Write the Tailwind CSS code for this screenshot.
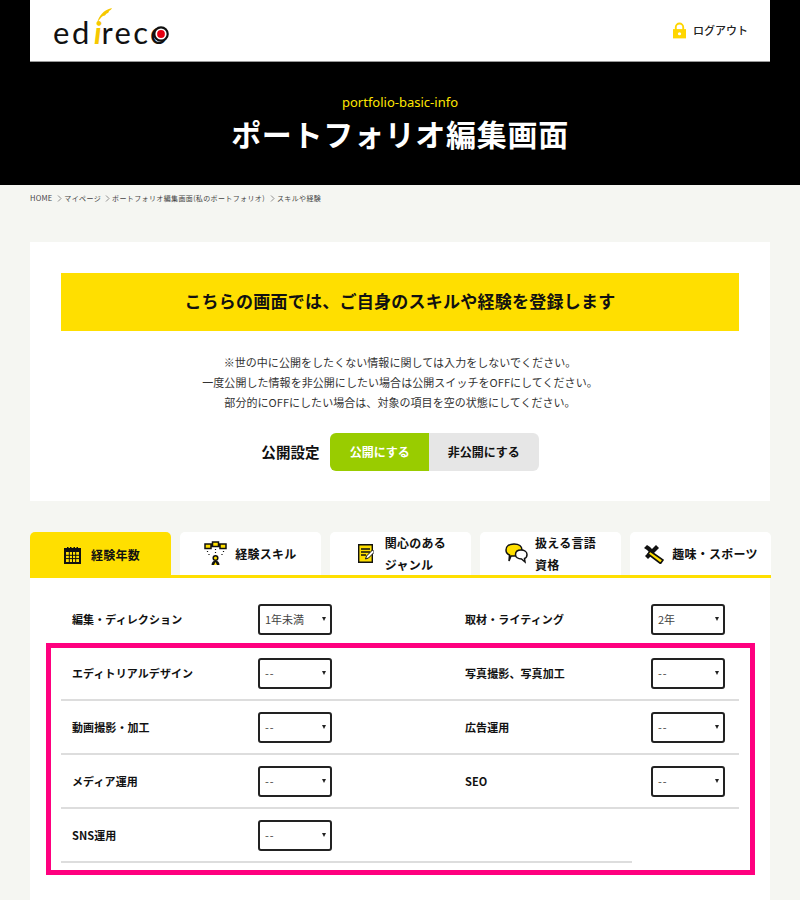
<!DOCTYPE html>
<html lang="ja"><head><meta charset="utf-8">
<script src="https://cdn.jsdelivr.net/npm/@tailwindcss/browser@4"></script>
</head>
<body class="bg-[#f5f6f2] font-['Noto_Sans_CJK_JP','Noto_Sans',sans-serif] text-[#111]">
<div class="relative w-[800px] h-[900px] overflow-hidden">
<header class="bg-black h-[185px] flex flex-col items-center">
  <div class="w-[740px] h-[62px] bg-white border-b border-[#999] flex items-center justify-between pl-[23px] pr-[22px] shrink-0">
    <div class="relative flex items-center w-[116px] h-[40px] font-['Lato',sans-serif] text-[31px] leading-none tracking-[2.6px] text-[#111] mt-[3px]">
      <span>ed</span><span class="italic text-[#f6c800] font-bold ml-[2px] tracking-normal">i</span><span class="tracking-[2.3px]">reco</span>
      <svg class="absolute left-[100px] top-[14px] w-[16px] h-[16px]" viewBox="0 0 16 16"><circle cx="8" cy="8" r="6.700" fill="#fff" stroke="#111" stroke-width="2.200"/><circle cx="8" cy="8" r="3.900" fill="#e60012"/></svg>
      <svg class="absolute left-[43px] top-[-4px] w-[17px] h-[15px]" viewBox="0 0 17 15"><path d="M1 15C3 8 7 2 16 0c-1 2-2 2-3 3 0 2-2 2-3 3 0 1-2 2-3 2-2 1-3 3-6 7z" fill="#f6c800"/></svg>
    </div>
    <div class="flex items-center gap-[7px] text-[11px] text-[#222] font-medium">
      <svg class="w-[13px] h-[17px]" viewBox="0 0 14 17"><path d="M3 8V5a4 4 0 0 1 8 0v3" fill="none" stroke="#ffd600" stroke-width="2"/><path d="M0 7h14v10H0z" fill="#ffd600"/><circle cx="7" cy="12" r="1.700" fill="#fff"/></svg>
      <span>ログアウト</span>
    </div>
  </div>
  <p class="mt-[31px] text-[13px] leading-[18px] text-[#ffe600] font-['Noto_Sans',sans-serif]">portfolio-basic-info</p>
  <h1 class="mt-0 text-[30px] leading-[44px] font-bold text-white tracking-[0.7px]">ポートフォリオ編集画面</h1>
</header>
<nav class="h-[57px] pl-[30px] pt-[6px] text-[7px] leading-[14px] text-[#444] flex items-start gap-[2px] tracking-[0.37px]">
  <span class="text-[7.5px] tracking-[0.2px]">HOME</span>
  <svg class="w-[5px] h-[7px] ml-[3px] mt-[4px]" viewBox="0 0 5 7"><path d="M1 .5l3 3-3 3" fill="none" stroke="#777" stroke-width=".8"/></svg>
  <span>マイページ</span>
  <svg class="w-[5px] h-[7px] ml-[2px] mt-[4px]" viewBox="0 0 5 7"><path d="M1 .5l3 3-3 3" fill="none" stroke="#777" stroke-width=".8"/></svg>
  <span>ポートフォリオ編集画面(私のポートフォリオ)</span>
  <svg class="w-[5px] h-[7px] ml-[3px] mt-[4px]" viewBox="0 0 5 7"><path d="M1 .5l3 3-3 3" fill="none" stroke="#777" stroke-width=".8"/></svg>
  <span>スキルや経験</span>
</nav>
<section class="mx-[30px] w-[740px] h-[259px] bg-white px-[31px] pt-[31px] flex flex-col items-center">
  <div class="w-[678px] h-[58px] bg-[#ffdf00] flex items-center justify-center pb-[2px] text-[17px] font-bold tracking-[0.25px]">こちらの画面では、ご自身のスキルや経験を登録します</div>
  <div class="mt-[21px] text-[11px] leading-[20px] text-center text-[#333] tracking-[0.05px]">
    <p>※世の中に公開をしたくない情報に関しては入力をしないでください。</p>
    <p>一度公開した情報を非公開にしたい場合は公開スイッチをOFFにしてください。</p>
    <p>部分的にOFFにしたい場合は、対象の項目を空の状態にしてください。</p>
  </div>
  <div class="mt-[21px] flex items-center">
    <span class="text-[14.5px] font-bold mr-[10px] tracking-[0.1px]">公開設定</span>
    <div class="flex h-[38px] w-[209px] rounded-[6px] overflow-hidden text-[12px] font-bold">
      <div class="w-[99px] bg-[#99cc00] text-white flex items-center justify-center pl-[1px]">公開にする</div>
      <div class="flex-1 bg-[#e6e6e6] flex items-center justify-center">非公開にする</div>
    </div>
  </div>
</section>
<div class="mt-[31px] ml-[30px] w-[741px] flex gap-[9px] h-[46px] border-b-[3px] border-[#ffdf00] text-[12px] font-bold tracking-[0.25px]">
  <div class="w-[141px] h-[46px] bg-[#ffdf00] rounded-t-[5px] flex items-center justify-center gap-[10px] pl-[3px]">
    <svg class="w-[17px] h-[18px]" viewBox="0 0 17 18"><path d="M0 2h17v16H0z" fill="#111"/><path d="M2 6h13v10H2z" fill="#ffdf00"/><path d="M3 1h1.500v3H3zM6 1h1.500v3H6zM9.500 1H11v3H9.500zM12.500 1H14v3h-1.500z" fill="#111"/><path d="M5.300 6v10M8.500 6v10M11.700 6v10M2 9.300h13M2 12.600h13" stroke="#111" stroke-width="1"/></svg>
    <span>経験年数</span>
  </div>
  <div class="w-[141px] h-[43px] bg-white rounded-t-[5px] flex items-center justify-center gap-[8px]">
    <svg class="w-[23px] h-[25px]" viewBox="0 0 23 25"><path d="M1 3h6v4.500H1zM8.500 1h6v4.500h-6zM16 3h6v4.500h-6z" fill="#ffdf00" stroke="#111" stroke-width="1.500"/><path d="M3.500 10v1M5 13v1M11.500 8v1M11.500 11v1M19.500 10v1M18 13v1" stroke="#111" stroke-width="1.200"/><circle cx="11.500" cy="17" r="2.300" fill="#ffdf00" stroke="#111" stroke-width="1.500"/><path d="M7.500 24c0-3 2-4.500 4-4.500s4 1.500 4 4.500z" fill="#111"/><path d="M10 24l1.500-3 1.500 3z" fill="#ffdf00"/></svg>
    <span>経験スキル</span>
  </div>
  <div class="w-[141px] h-[43px] bg-white rounded-t-[5px] flex items-center justify-center gap-[11px] pl-[3px]">
    <svg class="w-[16px] h-[19px]" viewBox="0 0 16 19"><path d="M.7.700h13.600v17.600H.7z" fill="#ffdf00" stroke="#111" stroke-width="1.400"/><path d="M3 5h9M3 8h9M3 11h5" stroke="#111" stroke-width="1.300"/><path d="M7.500 15l1-3 6-6 2 2-6 6z" fill="#fff" stroke="#111" stroke-width="1"/></svg>
    <span class="leading-[22px] text-left">関心のある<br>ジャンル</span>
  </div>
  <div class="w-[141px] h-[43px] bg-white rounded-t-[5px] flex items-center justify-center gap-[7px]">
    <svg class="w-[23px] h-[21px]" viewBox="0 0 23 21"><path d="M9 1c5 0 8 2.500 8 6s-3 6-8 6l-3 0-2 5 .5-6C2 11 1 9 1 7c0-3.500 3-6 8-6z" fill="#ffdf00" stroke="#111" stroke-width="1.500"/><path d="M16 7c3.500 0 6 2 6 4.500 0 2-1 3.500-2.500 4l.5 3.500-3.500-3c-3.500 0-6-2-6-4.500S12.500 7 16 7z" fill="#fff" stroke="#111" stroke-width="1.500"/></svg>
    <span class="leading-[22px] text-left">扱える言語<br>資格</span>
  </div>
  <div class="w-[141px] h-[43px] bg-white rounded-t-[5px] flex items-center justify-center gap-[8px]">
    <svg class="w-[21px] h-[20px]" viewBox="0 0 21 20"><path d="M13 1l3 3-11 11-3-3z" fill="#111"/><path d="M1 4l3-3 3 2 3 3-3 3-3-3z" fill="#111"/><path d="M7 7l13 9-2.500 3.500L5 10z" fill="#ffdf00" stroke="#111" stroke-width="1.600"/></svg>
    <span>趣味・スポーツ</span>
  </div>
</div>
<main class="mx-[30px] w-[740px] h-[322px] bg-white px-[31px] pt-[15px] text-[11px] font-bold tracking-[0.1px]">
  <div class="h-[54px] flex items-center border-b-2 border-transparent">
    <div class="w-[393px] flex items-center"><span class="w-[198px] pl-[11px]">編集・ディレクション</span>
      <div class="relative w-[74px] h-[31px] ml-[-1px] border-2 border-[#222] rounded-[3px] flex items-center pl-[5px] font-normal text-[#444] tracking-normal">1年未満<svg class="absolute right-[4px] top-[11px] w-[4px] h-[4px]" viewBox="0 0 5 5"><path d="M0 0h5L2.500 5z" fill="#222"/></svg></div></div>
    <div class="flex-1 flex items-center"><span class="w-[198px] pl-[11px]">取材・ライティング</span>
      <div class="relative w-[74px] h-[31px] ml-[-1px] border-2 border-[#222] rounded-[3px] flex items-center pl-[5px] font-normal text-[#444] tracking-normal">2年<svg class="absolute right-[4px] top-[11px] w-[4px] h-[4px]" viewBox="0 0 5 5"><path d="M0 0h5L2.500 5z" fill="#222"/></svg></div></div>
  </div>
  <div class="h-[54px] flex items-center border-b-2 border-[#ddd]">
    <div class="w-[393px] flex items-center"><span class="w-[198px] pl-[11px]">エディトリアルデザイン</span>
      <div class="relative w-[74px] h-[31px] ml-[-1px] border-2 border-[#222] rounded-[3px] flex items-center pl-[5px] font-normal text-[#444] tracking-[1px]">--<svg class="absolute right-[4px] top-[11px] w-[4px] h-[4px]" viewBox="0 0 5 5"><path d="M0 0h5L2.500 5z" fill="#222"/></svg></div></div>
    <div class="flex-1 flex items-center"><span class="w-[198px] pl-[11px]">写真撮影、写真加工</span>
      <div class="relative w-[74px] h-[31px] ml-[-1px] border-2 border-[#222] rounded-[3px] flex items-center pl-[5px] font-normal text-[#444] tracking-[1px]">--<svg class="absolute right-[4px] top-[11px] w-[4px] h-[4px]" viewBox="0 0 5 5"><path d="M0 0h5L2.500 5z" fill="#222"/></svg></div></div>
  </div>
  <div class="h-[54px] flex items-center border-b-2 border-[#ddd]">
    <div class="w-[393px] flex items-center"><span class="w-[198px] pl-[11px]">動画撮影・加工</span>
      <div class="relative w-[74px] h-[31px] ml-[-1px] border-2 border-[#222] rounded-[3px] flex items-center pl-[5px] font-normal text-[#444] tracking-[1px]">--<svg class="absolute right-[4px] top-[11px] w-[4px] h-[4px]" viewBox="0 0 5 5"><path d="M0 0h5L2.500 5z" fill="#222"/></svg></div></div>
    <div class="flex-1 flex items-center"><span class="w-[198px] pl-[11px]">広告運用</span>
      <div class="relative w-[74px] h-[31px] ml-[-1px] border-2 border-[#222] rounded-[3px] flex items-center pl-[5px] font-normal text-[#444] tracking-[1px]">--<svg class="absolute right-[4px] top-[11px] w-[4px] h-[4px]" viewBox="0 0 5 5"><path d="M0 0h5L2.500 5z" fill="#222"/></svg></div></div>
  </div>
  <div class="h-[54px] flex items-center border-b-2 border-[#ddd]">
    <div class="w-[393px] flex items-center"><span class="w-[198px] pl-[11px]">メディア運用</span>
      <div class="relative w-[74px] h-[31px] ml-[-1px] border-2 border-[#222] rounded-[3px] flex items-center pl-[5px] font-normal text-[#444] tracking-[1px]">--<svg class="absolute right-[4px] top-[11px] w-[4px] h-[4px]" viewBox="0 0 5 5"><path d="M0 0h5L2.500 5z" fill="#222"/></svg></div></div>
    <div class="flex-1 flex items-center"><span class="w-[198px] pl-[11px]">SEO</span>
      <div class="relative w-[74px] h-[31px] ml-[-1px] border-2 border-[#222] rounded-[3px] flex items-center pl-[5px] font-normal text-[#444] tracking-[1px]">--<svg class="absolute right-[4px] top-[11px] w-[4px] h-[4px]" viewBox="0 0 5 5"><path d="M0 0h5L2.500 5z" fill="#222"/></svg></div></div>
  </div>
  <div class="h-[54px] w-[571px] flex items-center border-b-2 border-[#ddd]">
    <span class="w-[198px] pl-[11px]">SNS運用</span>
    <div class="relative w-[74px] h-[31px] ml-[-1px] border-2 border-[#222] rounded-[3px] flex items-center pl-[5px] font-normal text-[#444] tracking-[1px]">--<svg class="absolute right-[4px] top-[11px] w-[4px] h-[4px]" viewBox="0 0 5 5"><path d="M0 0h5L2.500 5z" fill="#222"/></svg></div>
  </div>
</main>
<div class="absolute left-[46px] top-[643px] w-[709px] h-[232px] border-[5px] border-[#ff007f]"></div>
</div>
</body></html>
